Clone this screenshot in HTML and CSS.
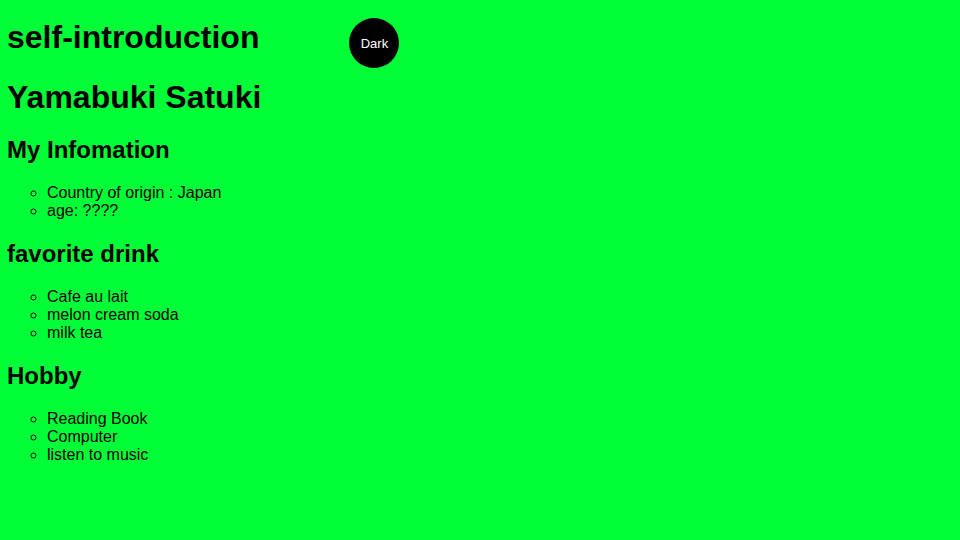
FILE: index.html
```
<!DOCTYPE html>
<html lang="en">
<head>
<meta charset="utf-8">
<title>self-introduction</title>
<link rel="stylesheet" href="styles.css">
</head>
<body>
<header class="top">
<h1>self-introduction</h1>
<button class="theme" type="button">Dark</button>
</header>
<main>
<h1>Yamabuki Satuki</h1>
<h2>My Infomation</h2>
<ul>
<li>Country of origin : Japan</li>
<li>age: ????</li>
</ul>
<h2>favorite drink</h2>
<ul>
<li>Cafe au lait</li>
<li>melon cream soda</li>
<li>milk tea</li>
</ul>
<h2>Hobby</h2>
<ul>
<li>Reading Book</li>
<li>Computer</li>
<li>listen to music</li>
</ul>
</main>
</body>
</html>
```
FILE: styles.css
```
body {
  margin: 0;
  padding: 18px 7px;
  background: #00ff37;
  color: #000;
  font-family: "Liberation Sans", Arial, sans-serif;
  font-size: 16px;
  line-height: 18px;
}

.top {
  display: flex;
  align-items: flex-start;
  gap: 90px;
}

h1 {
  margin: 0;
  font-size: 32px;
  line-height: 38px;
}

h2 {
  margin: 20px 0;
  font-size: 24px;
  line-height: 28px;
}

ul {
  margin: 16px 0;
  padding-left: 40px;
  list-style: circle;
}

.theme {
  width: 50px;
  height: 50px;
  padding: 0;
  border: 0;
  border-radius: 50%;
  background: #000;
  color: #fff;
  font-family: inherit;
  font-size: 13px;
}

main {
  margin-top: 10px;
}
```
